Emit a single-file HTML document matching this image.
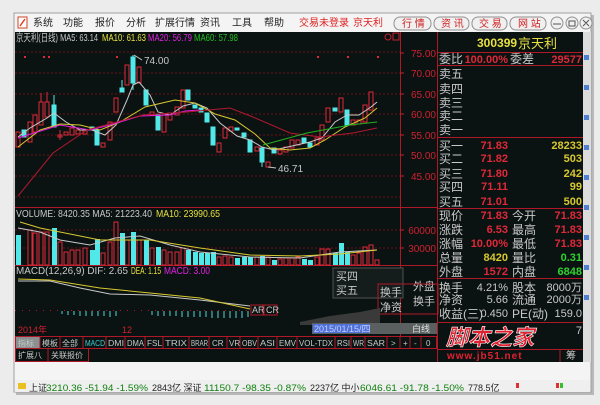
<!DOCTYPE html>
<html><head><meta charset="utf-8"><style>
*{margin:0;padding:0}
body{width:600px;height:400px;overflow:hidden;background:#ececec;position:relative;font-family:"Liberation Sans","Noto Sans CJK SC",sans-serif}
svg text{font-family:"Liberation Sans","Noto Sans CJK SC",sans-serif}
</style></head><body>
<svg width="600" height="400" viewBox="0 0 600 400" xmlns="http://www.w3.org/2000/svg">
<rect x="16" y="15" width="578" height="380" fill="#b8b8b8"/>
<rect x="14" y="13" width="577" height="379" fill="#f4f4f4" stroke="#a0a0a0"/>
<rect x="18" y="17" width="9" height="11" fill="#fff" stroke="#d04020"/>
<path d="M20 26 L25 19" stroke="#e04020" stroke-width="1.5"/>
<g font-size="10" fill="#222">
<text x="33" y="26">系统</text><text x="63" y="26">功能</text><text x="95" y="26">报价</text><text x="126" y="26">分析</text><text x="155" y="26">扩展行情</text><text x="200" y="26">资讯</text><text x="232" y="26">工具</text><text x="264" y="26">帮助</text>
</g>
<text x="299" y="26" font-size="10" fill="#e02020">交易未登录</text>
<text x="353" y="26" font-size="10" fill="#e02020">京天利</text>
<g fill="#f0f0f0" stroke="#909090">
<rect x="394" y="17" width="37" height="13" rx="6"/><rect x="434" y="17" width="35" height="13" rx="6"/><rect x="472" y="17" width="35" height="13" rx="6"/><rect x="510" y="17" width="36" height="13" rx="6"/>
<circle cx="557" cy="23" r="6"/><circle cx="572" cy="23" r="6"/><circle cx="586" cy="23" r="6"/>
</g>
<g font-size="10" fill="#d02020"><text x="402" y="27">行 情</text><text x="441" y="27">资 讯</text><text x="479" y="27">交 易</text><text x="518" y="27">网 站</text></g>
<path d="M553 24h8M569 21h6v5h-6zM583 20l6 6M589 20l-6 6" stroke="#555" fill="none"/>
<rect x="15" y="32" width="568" height="330" fill="#0b1312"/>
<rect x="583" y="32" width="8" height="330" fill="#dcdcdc"/>
<g fill="#5080d0"><rect x="584" y="55" width="5" height="5"/><rect x="584" y="85" width="5" height="5"/><rect x="584" y="115" width="5" height="5"/><rect x="584" y="145" width="5" height="5"/><rect x="584" y="175" width="5" height="5"/><rect x="584" y="205" width="5" height="5"/><rect x="584" y="235" width="5" height="5"/><rect x="584" y="265" width="5" height="5"/><rect x="584" y="295" width="5" height="5"/></g>
<g stroke="#6a1018" stroke-dasharray="2,2">
<line x1="15" y1="52" x2="400" y2="52"/><line x1="15" y1="73" x2="400" y2="73"/><line x1="15" y1="94" x2="400" y2="94"/><line x1="15" y1="114" x2="400" y2="114"/><line x1="15" y1="135" x2="400" y2="135"/><line x1="15" y1="155" x2="400" y2="155"/><line x1="15" y1="176" x2="400" y2="176"/><line x1="15" y1="197" x2="400" y2="197"/>
<line x1="15" y1="230" x2="400" y2="230"/><line x1="15" y1="248" x2="400" y2="248"/>
</g>
<g stroke="#b01828">
<line x1="400.5" y1="32" x2="400.5" y2="336"/>
<line x1="15" y1="207.5" x2="437" y2="207.5"/>
<line x1="15" y1="265.5" x2="437" y2="265.5"/>
<line x1="437.5" y1="32" x2="437.5" y2="362"/>
<line x1="437" y1="52.5" x2="583" y2="52.5"/><line x1="437" y1="65.5" x2="583" y2="65.5"/><line x1="437" y1="137.5" x2="583" y2="137.5"/><line x1="437" y1="208.5" x2="583" y2="208.5"/><line x1="437" y1="278.5" x2="583" y2="278.5"/><line x1="437" y1="322.5" x2="583" y2="322.5"/><line x1="437" y1="349.5" x2="583" y2="349.5"/>
</g>
<g stroke="#c02030"><line x1="400" y1="53" x2="404" y2="53"/><line x1="400" y1="73" x2="404" y2="73"/><line x1="400" y1="94" x2="404" y2="94"/><line x1="400" y1="114" x2="404" y2="114"/><line x1="400" y1="135" x2="404" y2="135"/><line x1="400" y1="155" x2="404" y2="155"/><line x1="400" y1="176" x2="404" y2="176"/><line x1="400" y1="230" x2="404" y2="230"/><line x1="400" y1="248" x2="404" y2="248"/></g>
<g font-size="10" fill="#d02030" text-anchor="end"><text x="436" y="57">75.00</text><text x="436" y="77">70.00</text><text x="436" y="98">65.00</text><text x="436" y="118">60.00</text><text x="436" y="139">55.00</text><text x="436" y="159">50.00</text><text x="436" y="180">45.00</text><text x="436" y="234">60000</text><text x="436" y="252">30000</text></g>
<g font-size="10.5"><text x="16" y="41" fill="#c8c8c8" textLength="82" lengthAdjust="spacingAndGlyphs">京天利(日线) MA5: 63.14</text><text x="102" y="41" fill="#e8e040" textLength="44" lengthAdjust="spacingAndGlyphs">MA10: 61.63</text><text x="148" y="41" fill="#e020e0" textLength="44" lengthAdjust="spacingAndGlyphs">MA20: 56.79</text><text x="194" y="41" fill="#20c020" textLength="44" lengthAdjust="spacingAndGlyphs">MA60: 57.98</text>
<text x="16" y="217" fill="#c8c8c8" textLength="136" lengthAdjust="spacingAndGlyphs">VOLUME: 8420.35 MA5: 21223.40</text><text x="156" y="217" fill="#e8e040" textLength="64" lengthAdjust="spacingAndGlyphs">MA10: 23990.65</text>
<text x="16" y="274" fill="#c8c8c8" textLength="112" lengthAdjust="spacingAndGlyphs">MACD(12,26,9) DIF: 2.65</text><text x="131" y="274" fill="#e8e040" textLength="30" lengthAdjust="spacingAndGlyphs">DEA: 1.15</text><text x="164" y="274" fill="#e020e0" textLength="46" lengthAdjust="spacingAndGlyphs">MACD: 3.00</text></g>
<circle cx="388" cy="37" r="3" fill="none" stroke="#c02030"/><rect x="393" y="33" width="6" height="7" fill="none" stroke="#c02030"/>
<g stroke="#e02838" fill="#0b1312" stroke-width="1">
<rect x="16" y="132" width="4" height="15"/><rect x="28" y="122" width="4" height="20"/><rect x="33" y="115" width="4" height="17"/><rect x="39" y="102" width="4" height="23"/><line x1="41" y1="93" x2="41" y2="102"/><rect x="45" y="102" width="4" height="15"/><line x1="47" y1="92" x2="47" y2="102"/>
<rect x="58" y="135" width="4" height="2"/><line x1="60" y1="130" x2="60" y2="140"/><rect x="64" y="132" width="4" height="3"/><rect x="70" y="128" width="4" height="7"/><rect x="76" y="130" width="4" height="4"/><rect x="83" y="130" width="4" height="4"/>
<rect x="101" y="143" width="4" height="4"/><rect x="108" y="122" width="4" height="18"/><rect x="114" y="98" width="4" height="14"/><rect x="125" y="65" width="4" height="20"/><rect x="137" y="67" width="4" height="16"/><rect x="150" y="112" width="4" height="3"/><rect x="162" y="115" width="4" height="17"/><rect x="168" y="113" width="4" height="7"/><rect x="175" y="107" width="4" height="8"/><rect x="181" y="90" width="4" height="18"/>
<rect x="217" y="143" width="4" height="9"/><rect x="223" y="128" width="4" height="10"/><rect x="229" y="127" width="4" height="4"/><rect x="255" y="147" width="4" height="4"/><rect x="266" y="162" width="4" height="5"/><rect x="278" y="150" width="4" height="4"/><rect x="284" y="147" width="4" height="5"/><rect x="290" y="140" width="4" height="8"/><rect x="296" y="140" width="4" height="5"/><rect x="315" y="138" width="4" height="7"/><rect x="320" y="125" width="4" height="15"/><rect x="326" y="108" width="4" height="14"/><rect x="339" y="98" width="4" height="14"/><rect x="351" y="120" width="4" height="5"/><rect x="357" y="120" width="4" height="4"/><rect x="363" y="105" width="4" height="17"/><rect x="369" y="92" width="4" height="18"/>
</g>
<g fill="#50e8e8" stroke="#50e8e8">
<rect x="22" y="130" width="4" height="7"/><rect x="52" y="105" width="4" height="22"/><line x1="54" y1="95" x2="54" y2="105"/><rect x="90" y="127" width="4" height="3"/><rect x="95" y="130" width="4" height="15"/><rect x="120" y="88" width="4" height="4"/><line x1="122" y1="80" x2="122" y2="92"/><rect x="131" y="57" width="4" height="26"/><line x1="133" y1="55" x2="133" y2="90"/><rect x="144" y="90" width="4" height="15"/><rect x="156" y="115" width="4" height="15"/><rect x="186" y="90" width="4" height="10"/><rect x="193" y="105" width="4" height="3"/><rect x="199" y="108" width="4" height="4"/><rect x="205" y="113" width="4" height="9"/><rect x="211" y="127" width="4" height="18"/><rect x="235" y="128" width="4" height="2"/><rect x="242" y="133" width="4" height="4"/><rect x="248" y="140" width="4" height="12"/><rect x="260" y="148" width="4" height="14"/><line x1="262" y1="162" x2="262" y2="167"/><rect x="272" y="148" width="4" height="5"/><rect x="302" y="138" width="4" height="5"/><rect x="308" y="143" width="4" height="4"/><rect x="333" y="108" width="4" height="3"/><rect x="345" y="110" width="4" height="15"/>
</g>
<g fill="none" stroke-width="1">
<polyline stroke="#c8c8c8" points="18,137 30,128 47,118 54,113 66,122 80,130 92,130 105,135 116,125 127,100 133,85 139,82 150,95 158,112 170,115 183,106 195,103 207,108 220,123 237,136 250,140 262,147 274,150 292,146 310,142 322,138 335,122 347,115 359,115 371,107 377,102"/>
<polyline stroke="#d8c830" points="18,147 40,130 60,124 80,125 100,130 120,122 145,107 175,100 195,103 215,114 235,120 255,134 270,148 290,150 310,148 325,140 345,127 365,118 377,108"/>
<polyline stroke="#e020e0" points="18,138 60,125 90,130 110,125 140,116 170,115 185,111 200,110"/>
<polyline stroke="#b01830" points="18,196 53,153 87,130 143,115 187,112 230,108 253,117 290,133 320,137 353,133 377,128"/>
<polyline stroke="#20b020" points="263,145 307,133 350,125 377,122"/>
</g>
<path d="M134 55 L142 60" stroke="#c8c8c8"/><text x="144" y="64" font-size="10" fill="#c8c8c8">74.00</text>
<path d="M268 167 L276 168" stroke="#c8c8c8"/><text x="278" y="172" font-size="10" fill="#c8c8c8">46.71</text>
<g fill="#e02838"><rect x="24" y="56" width="2" height="2"/><rect x="43" y="56" width="2" height="2"/><rect x="48" y="56" width="2" height="2"/><rect x="116" y="56" width="2" height="2"/><rect x="317" y="56" width="2" height="2"/><rect x="347" y="56" width="2" height="2"/><rect x="377" y="56" width="2" height="2"/></g>
<g stroke="#e02838" fill="#0b1312">
<rect x="28" y="230" width="4" height="35"/><rect x="33" y="233" width="4" height="32"/><rect x="39" y="232" width="4" height="33"/><rect x="45" y="232" width="4" height="33"/><rect x="58" y="242" width="4" height="23"/><rect x="64" y="252" width="4" height="13"/><rect x="70" y="250" width="4" height="15"/><rect x="76" y="250" width="4" height="15"/><rect x="83" y="248" width="4" height="17"/><rect x="101" y="253" width="4" height="12"/><rect x="108" y="242" width="4" height="23"/><rect x="114" y="222" width="4" height="43"/><rect x="125" y="240" width="4" height="25"/><rect x="137" y="240" width="4" height="25"/><rect x="150" y="248" width="4" height="17"/><rect x="162" y="250" width="4" height="15"/><rect x="168" y="252" width="4" height="13"/><rect x="175" y="252" width="4" height="13"/><rect x="181" y="248" width="4" height="17"/><rect x="217" y="257" width="4" height="8"/><rect x="223" y="256" width="4" height="9"/><rect x="229" y="257" width="4" height="8"/><rect x="255" y="257" width="4" height="8"/><rect x="266" y="257" width="4" height="8"/><rect x="278" y="259" width="4" height="6"/><rect x="284" y="258" width="4" height="7"/><rect x="290" y="258" width="4" height="7"/><rect x="296" y="257" width="4" height="8"/><rect x="315" y="257" width="4" height="8"/><rect x="320" y="249" width="4" height="16"/><rect x="326" y="249" width="4" height="16"/><rect x="351" y="255" width="4" height="10"/><rect x="357" y="253" width="4" height="12"/><rect x="363" y="247" width="4" height="18"/><rect x="369" y="245" width="4" height="20"/><rect x="375" y="260" width="4" height="5"/>
</g>
<g fill="#50e8e8">
<rect x="16" y="235" width="5" height="30"/><rect x="52" y="228" width="5" height="37"/><rect x="90" y="250" width="5" height="15"/><rect x="95" y="239" width="5" height="26"/><rect x="120" y="233" width="5" height="32"/><rect x="131" y="232" width="5" height="33"/><rect x="144" y="240" width="5" height="25"/><rect x="156" y="247" width="5" height="18"/><rect x="186" y="250" width="5" height="15"/><rect x="193" y="252" width="5" height="13"/><rect x="199" y="253" width="5" height="12"/><rect x="205" y="253" width="5" height="12"/><rect x="211" y="252" width="5" height="13"/><rect x="235" y="258" width="5" height="7"/><rect x="242" y="257" width="5" height="8"/><rect x="248" y="257" width="5" height="8"/><rect x="260" y="256" width="5" height="9"/><rect x="272" y="260" width="5" height="5"/><rect x="302" y="259" width="5" height="6"/><rect x="308" y="260" width="5" height="5"/><rect x="333" y="253" width="5" height="12"/><rect x="339" y="243" width="5" height="22"/><rect x="345" y="252" width="5" height="13"/>
</g>
<polyline fill="none" stroke="#c8c8c8" points="18,228 40,232 60,240 90,245 115,238 140,236 170,245 200,252 250,257 300,258 340,252 377,250"/>
<polyline fill="none" stroke="#d8c830" points="20,222 40,228 70,234 100,240 150,240 200,248 250,255 300,256 340,254 377,250"/>
<polyline fill="none" stroke="#c8c8c8" points="18,281 50,281 80,288 110,294 150,295 200,300 250,306"/>
<polyline fill="none" stroke="#d8c830" points="18,279 50,280 100,288 150,293 200,298 250,309"/>
<line x1="15" y1="310.5" x2="250" y2="310.5" stroke="#b01828" stroke-dasharray="1,6"/>
<g stroke="#50d8d8"><path d="M62 311v3M68 311v4M74 311v4M80 311v5M86 311v5M92 311v5M98 311v5M104 311v5M110 311v6M116 311v5M152 311v4M158 311v5M164 311v5M170 311v5M176 311v5M182 311v6M188 311v6M194 311v6M200 311v6M206 311v6M212 311v7M218 311v7M224 311v7M230 311v7M236 311v7M242 311v7M248 311v6"/></g>
<g font-size="9" fill="#c8c8c8"><rect x="251" y="305" width="12" height="10" fill="none" stroke="#b01828"/><text x="252" y="313">AR</text><rect x="264" y="305" width="13" height="10" fill="none" stroke="#b01828"/><text x="266" y="313">CR</text></g>
<rect x="333" y="268" width="70" height="30" fill="#141c1c" stroke="#505050"/>
<g font-size="11" fill="#c8c8c8"><text x="336" y="280">买四</text><text x="336" y="294">买五</text><text x="380" y="296">换手</text><text x="380" y="311">净资</text><text x="413" y="290">外盘</text><text x="413" y="305">换手</text></g>
<rect x="378" y="284" width="60" height="30" fill="none" stroke="#b01828"/>
<path d="M300 322 L330 316 L360 312 L380 308 L380 325 L300 325z" fill="#3a3a3a"/>
<rect x="312" y="323" width="125" height="11" fill="#5a6060"/>
<rect x="313" y="324" width="57" height="9" fill="#5070d8"/>
<text x="314" y="332" font-size="9" fill="#c0d0ff">2015/01/15/四</text>
<text x="412" y="332" font-size="9" fill="#e0e0e0">白线</text>
<text x="18" y="333" font-size="9" fill="#d02030">2014年</text><text x="122" y="333" font-size="9" fill="#d02030">12</text>
<g stroke="#b01828" fill="none"><rect x="15.5" y="336.5" width="421" height="12"/><rect x="15.5" y="348.5" width="73" height="13"/></g>
<rect x="16" y="337" width="24" height="11" fill="#8a9090"/>
<g font-size="8" fill="#c8c8c8"><text x="18" y="346">指标</text><text x="42" y="346">模板</text><text x="62" y="346">全部</text><text x="85" y="346" fill="#40d0d0" textLength="20" lengthAdjust="spacingAndGlyphs">MACD</text><text x="108" y="346" textLength="16" lengthAdjust="spacingAndGlyphs">DMI</text><text x="127" y="346" textLength="17" lengthAdjust="spacingAndGlyphs">DMA</text><text x="147" y="346" textLength="15" lengthAdjust="spacingAndGlyphs">FSL</text><text x="165" y="346" textLength="22" lengthAdjust="spacingAndGlyphs">TRIX</text><text x="191" y="346" textLength="17" lengthAdjust="spacingAndGlyphs">BRAR</text><text x="212" y="346">CR</text><text x="229" y="346">VR</text><text x="242" y="346" textLength="15" lengthAdjust="spacingAndGlyphs">OBV</text><text x="260" y="346" textLength="15" lengthAdjust="spacingAndGlyphs">ASI</text><text x="279" y="346" textLength="17" lengthAdjust="spacingAndGlyphs">EMV</text><text x="299" y="346" textLength="34" lengthAdjust="spacingAndGlyphs">VOL-TDX</text><text x="337" y="346" textLength="13" lengthAdjust="spacingAndGlyphs">RSI</text><text x="353" y="346" textLength="11" lengthAdjust="spacingAndGlyphs">WR</text><text x="367" y="346" textLength="18" lengthAdjust="spacingAndGlyphs">SAR</text><text x="391" y="346">&gt;</text><text x="403" y="346">+</text><text x="414" y="346">-</text><text x="426" y="346">0</text>
<text x="18" y="358">扩展八</text><text x="51" y="358">关联报价</text></g>
<g stroke="#b01828"><path d="M40 337v11M60 337v11M83 337v11M106 337v11M125 337v11M145 337v11M163 337v11M189 337v11M209 337v11M227 337v11M240 337v11M258 337v11M277 337v11M297 337v11M335 337v11M351 337v11M365 337v11M387 337v11M400 337v11M410 337v11M421 337v11M48 349v12"/></g>
<text x="477" y="47" font-size="12" fill="#e8e040" font-weight="bold">300399</text><text x="518" y="48" font-size="13" fill="#e8e040">京天利</text>
<g font-size="12" fill="#c8c8c8">
<text x="439" y="63">委比</text><text x="510" y="63">委差</text>
<text x="439" y="78">卖五</text><text x="439" y="93">卖四</text><text x="439" y="107">卖三</text><text x="439" y="120">卖二</text><text x="439" y="134">卖一</text>
<text x="439" y="150">买一</text><text x="439" y="163">买二</text><text x="439" y="178">买三</text><text x="439" y="191">买四</text><text x="439" y="206">买五</text>
<text x="439" y="220">现价</text><text x="512" y="220">今开</text><text x="439" y="234">涨跌</text><text x="512" y="234">最高</text><text x="439" y="248">涨幅</text><text x="512" y="248">最低</text><text x="439" y="262">总量</text><text x="512" y="262">量比</text><text x="439" y="276">外盘</text><text x="512" y="276">内盘</text>
<text x="439" y="292">换手</text><text x="512" y="292">股本</text><text x="439" y="304">净资</text><text x="512" y="304">流通</text><text x="439" y="318">收益(三)</text><text x="512" y="318">PE(动)</text>
</g>
<g font-size="11" text-anchor="end" font-weight="bold">
<text x="508" y="63" fill="#e02838" text-anchor="end">100.00%</text><text x="582" y="63" fill="#e02838">29577</text>
<g fill="#e02838"><text x="508" y="149">71.83</text><text x="508" y="162">71.82</text><text x="508" y="177">71.80</text><text x="508" y="190">71.11</text><text x="508" y="205">71.01</text>
<text x="508" y="219">71.83</text><text x="582" y="219">71.83</text><text x="508" y="233">6.53</text><text x="582" y="233">71.83</text><text x="508" y="247">10.00%</text><text x="582" y="247">71.83</text><text x="508" y="275">1572</text></g>
<g fill="#d8c830"><text x="582" y="149">28233</text><text x="582" y="162">503</text><text x="582" y="177">242</text><text x="582" y="190">99</text><text x="582" y="205">500</text><text x="508" y="261">8420</text></g>
<g fill="#30d030"><text x="582" y="261">0.31</text><text x="582" y="275">6848</text></g>
<g fill="#c8c8c8" font-weight="normal"><text x="508" y="291">4.21%</text><text x="582" y="291">8000万</text><text x="508" y="303">5.66</text><text x="582" y="303">2000万</text><text x="508" y="317">0.450</text><text x="582" y="317">159.0</text><text x="582" y="334">7</text></g>
</g>
<text x="446" y="345" font-size="22" fill="#e02030" font-style="italic" font-weight="bold" stroke="#fff" stroke-width="0.6" font-family="Noto Serif CJK SC,serif">脚本之家</text>
<text x="447" y="359" font-size="10" fill="#e02030" font-weight="bold" letter-spacing="1">www.jb51.net</text>
<line x1="560" y1="350" x2="560" y2="362" stroke="#b01828"/><text x="566" y="359" font-size="10" fill="#c8c8c8">筹</text>
<rect x="15" y="380" width="575" height="12" fill="#efefef"/>
<rect x="18" y="383" width="8" height="6" fill="#e8c020"/>
<g font-size="9"><text x="29" y="391" fill="#222">上证</text><text x="46" y="391" fill="#108010" textLength="102" lengthAdjust="spacingAndGlyphs">3210.36  -51.94  -1.59%</text><text x="152" y="391" fill="#222">2843亿  深证</text><text x="204" y="391" fill="#108010" textLength="102" lengthAdjust="spacingAndGlyphs">11150.7  -98.35  -0.87%</text><text x="310" y="391" fill="#222">2237亿  中小</text><text x="360" y="391" fill="#108010" textLength="104" lengthAdjust="spacingAndGlyphs">6046.61  -91.78  -1.50%</text><text x="468" y="391" fill="#222">778.5亿</text></g>
<rect x="516" y="383" width="3" height="5" fill="#e03030"/><rect x="556" y="383" width="3" height="5" fill="#e03030"/><rect x="560" y="383" width="3" height="5" fill="#30c030"/>
</svg>
</body></html>
